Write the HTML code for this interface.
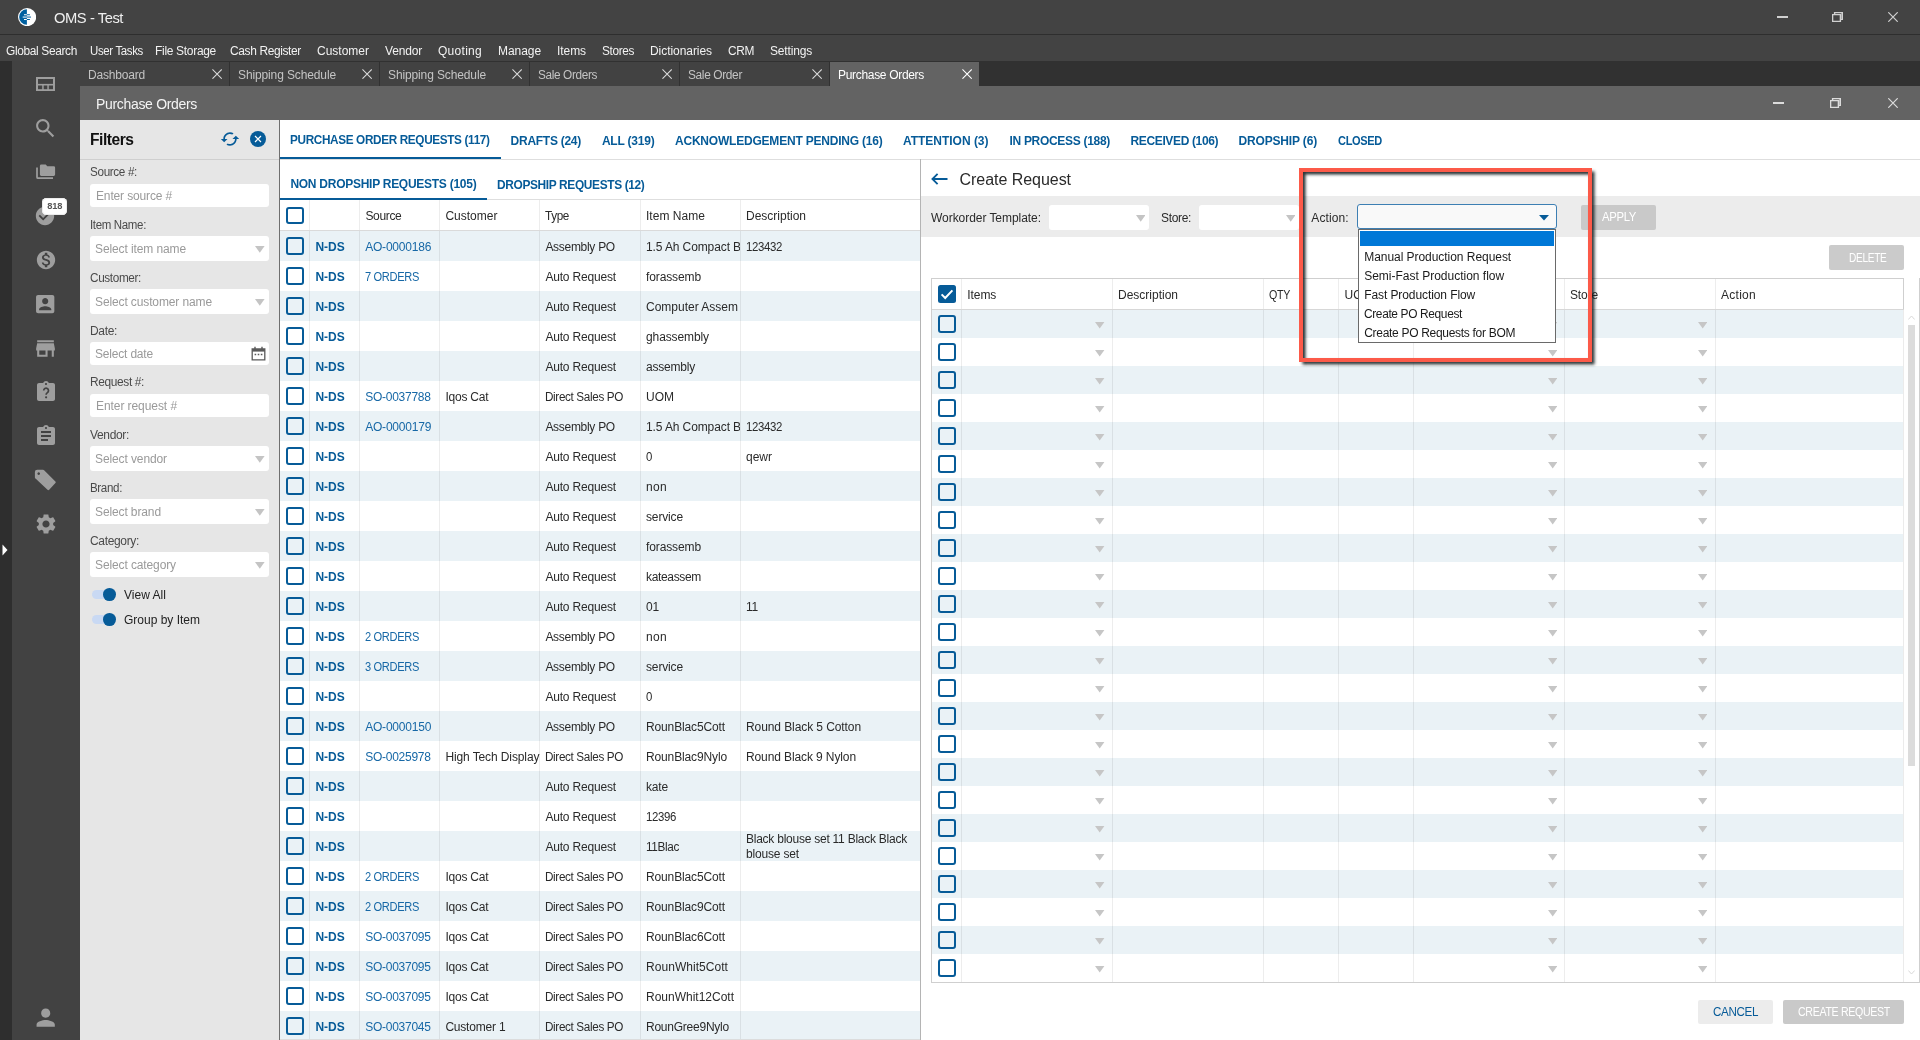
<!DOCTYPE html>
<html><head><meta charset="utf-8"><title>OMS - Test</title>
<style>
html,body{margin:0;padding:0;}
body{width:1920px;height:1040px;overflow:hidden;position:relative;background:#fff;font-family:"Liberation Sans",sans-serif;}
#r{position:absolute;left:0;top:0;width:1920px;height:1040px;overflow:hidden;will-change:transform;}
#r>div,#r>span,#r>svg{position:absolute;display:block;}
.t{white-space:nowrap;}
</style></head><body><div id="r">
<div style="left:0px;top:0px;width:1920px;height:34px;background:#434343;"></div>
<div style="left:0px;top:34px;width:1920px;height:1px;background:#2e2e2e;"></div>
<div style="left:0px;top:35px;width:1920px;height:26px;background:#434343;"></div>
<div style="left:0px;top:61px;width:1920px;height:25px;background:#313131;"></div>
<div style="left:0px;top:61px;width:12px;height:979px;background:#2e2e2e;"></div>
<div style="left:12px;top:61px;width:68px;height:979px;background:#424242;"></div>
<svg style="left:18px;top:7.8px;" width="18.2" height="18.2" viewBox="0 0 18.2 18.2"><circle cx="9.1" cy="9.1" r="9.1" fill="#fff"/><path d="M8.9 1.3A7.75 7.75 0 0 0 8.9 16.8Z" fill="#0060a0"/><path d="M6 6.7h2.9M6 11.6h2.9" stroke="#fff" stroke-width="1.05" fill="none"/><path d="M4.7 9.1h4.2" stroke="#c8dcec" stroke-width="1.3" fill="none"/><path d="M8.9 6.7h3M8.9 11.6h3" stroke="#0060a0" stroke-width="1.05" fill="none"/><path d="M8.9 9.1h4.1" stroke="#3c82b4" stroke-width="1.3" fill="none"/></svg>
<span class="t" style="left:54px;top:8.30px;font-size:15px;line-height:19px;color:#f0f0f0;letter-spacing:-0.450px;transform:scaleX(0.9823);transform-origin:0 0;">OMS - Test</span>
<div style="left:1777px;top:16.1px;width:10.5px;height:1.8px;background:#d0d0d0;"></div>
<svg style="left:1832px;top:11.5px;" width="11" height="10" viewBox="0 0 11 10"><path d="M0.6 2.6h7.8v6.8h-7.8z" fill="none" stroke="#d0d0d0" stroke-width="1.4"/><path d="M2.6 2.6V0.6h7.8v6.8H8.4" fill="none" stroke="#d0d0d0" stroke-width="1.4"/><path d="M8.9 1.2h1v5.6h-1z" fill="#d0d0d0" opacity=".6"/></svg>
<svg style="left:1887.5px;top:11.5px;" width="10" height="10" viewBox="0 0 10 10"><path d="M0.3 0.3L9.7 9.7M9.7 0.3L0.3 9.7" stroke="#d0d0d0" stroke-width="1.2"/></svg>
<span class="t" style="left:6px;top:42.84px;font-size:12px;line-height:16px;color:#f2f2f2;letter-spacing:-0.360px;transform:scaleX(0.9946);transform-origin:0 0;">Global Search</span>
<span class="t" style="left:90px;top:42.84px;font-size:12px;line-height:16px;color:#f2f2f2;letter-spacing:-0.360px;transform:scaleX(0.9543);transform-origin:0 0;">User Tasks</span>
<span class="t" style="left:155px;top:42.84px;font-size:12px;line-height:16px;color:#f2f2f2;letter-spacing:-0.310px;">File Storage</span>
<span class="t" style="left:230px;top:42.84px;font-size:12px;line-height:16px;color:#f2f2f2;letter-spacing:-0.360px;transform:scaleX(0.9948);transform-origin:0 0;">Cash Register</span>
<span class="t" style="left:317px;top:42.84px;font-size:12px;line-height:16px;color:#f2f2f2;letter-spacing:-0.003px;">Customer</span>
<span class="t" style="left:385px;top:42.84px;font-size:12px;line-height:16px;color:#f2f2f2;letter-spacing:-0.174px;">Vendor</span>
<span class="t" style="left:438px;top:42.84px;font-size:12px;line-height:16px;color:#f2f2f2;letter-spacing:0.280px;">Quoting</span>
<span class="t" style="left:498px;top:42.84px;font-size:12px;line-height:16px;color:#f2f2f2;letter-spacing:-0.062px;">Manage</span>
<span class="t" style="left:557px;top:42.84px;font-size:12px;line-height:16px;color:#f2f2f2;letter-spacing:-0.069px;">Items</span>
<span class="t" style="left:602px;top:42.84px;font-size:12px;line-height:16px;color:#f2f2f2;letter-spacing:-0.360px;transform:scaleX(0.9838);transform-origin:0 0;">Stores</span>
<span class="t" style="left:650px;top:42.84px;font-size:12px;line-height:16px;color:#f2f2f2;letter-spacing:-0.059px;">Dictionaries</span>
<span class="t" style="left:728px;top:42.84px;font-size:12px;line-height:16px;color:#f2f2f2;letter-spacing:-0.360px;transform:scaleX(0.9904);transform-origin:0 0;">CRM</span>
<span class="t" style="left:770px;top:42.84px;font-size:12px;line-height:16px;color:#f2f2f2;letter-spacing:-0.171px;">Settings</span>
<div style="left:80px;top:62px;width:149px;height:24px;background:#424242;"></div>
<span class="t" style="left:88px;top:66.84px;font-size:12px;line-height:16px;color:#c4c4c4;letter-spacing:-0.191px;">Dashboard</span>
<svg style="left:212.3px;top:69px;" width="10.2" height="10.2" viewBox="0 0 11 11"><path d="M0.5 0.5L10.5 10.5M10.5 0.5L0.5 10.5" stroke="#d8d8d8" stroke-width="1.1"/></svg>
<div style="left:230px;top:62px;width:149px;height:24px;background:#424242;"></div>
<span class="t" style="left:238px;top:66.84px;font-size:12px;line-height:16px;color:#c4c4c4;letter-spacing:-0.124px;">Shipping Schedule</span>
<svg style="left:362.3px;top:69px;" width="10.2" height="10.2" viewBox="0 0 11 11"><path d="M0.5 0.5L10.5 10.5M10.5 0.5L0.5 10.5" stroke="#d8d8d8" stroke-width="1.1"/></svg>
<div style="left:380px;top:62px;width:149px;height:24px;background:#424242;"></div>
<span class="t" style="left:388px;top:66.84px;font-size:12px;line-height:16px;color:#c4c4c4;letter-spacing:-0.124px;">Shipping Schedule</span>
<svg style="left:512.3px;top:69px;" width="10.2" height="10.2" viewBox="0 0 11 11"><path d="M0.5 0.5L10.5 10.5M10.5 0.5L0.5 10.5" stroke="#d8d8d8" stroke-width="1.1"/></svg>
<div style="left:530px;top:62px;width:149px;height:24px;background:#424242;"></div>
<span class="t" style="left:538px;top:66.84px;font-size:12px;line-height:16px;color:#c4c4c4;letter-spacing:-0.360px;transform:scaleX(0.9820);transform-origin:0 0;">Sale Orders</span>
<svg style="left:662.3px;top:69px;" width="10.2" height="10.2" viewBox="0 0 11 11"><path d="M0.5 0.5L10.5 10.5M10.5 0.5L0.5 10.5" stroke="#d8d8d8" stroke-width="1.1"/></svg>
<div style="left:680px;top:62px;width:149px;height:24px;background:#424242;"></div>
<span class="t" style="left:688px;top:66.84px;font-size:12px;line-height:16px;color:#c4c4c4;letter-spacing:-0.360px;transform:scaleX(0.9919);transform-origin:0 0;">Sale Order</span>
<svg style="left:812.3px;top:69px;" width="10.2" height="10.2" viewBox="0 0 11 11"><path d="M0.5 0.5L10.5 10.5M10.5 0.5L0.5 10.5" stroke="#d8d8d8" stroke-width="1.1"/></svg>
<div style="left:830px;top:62px;width:149px;height:24px;background:#636363;"></div>
<span class="t" style="left:838px;top:66.84px;font-size:12px;line-height:16px;color:#ffffff;letter-spacing:-0.315px;">Purchase Orders</span>
<svg style="left:962.3px;top:69px;" width="10.2" height="10.2" viewBox="0 0 11 11"><path d="M0.5 0.5L10.5 10.5M10.5 0.5L0.5 10.5" stroke="#fff" stroke-width="1.1"/></svg>
<div style="left:80px;top:86px;width:1840px;height:34px;background:#636363;"></div>
<span class="t" style="left:96px;top:95.15px;font-size:14px;line-height:18px;color:#f4f4f4;letter-spacing:-0.322px;">Purchase Orders</span>
<div style="left:1773px;top:102.1px;width:10.5px;height:1.8px;background:#dcdcdc;"></div>
<svg style="left:1830px;top:97.5px;" width="11" height="10" viewBox="0 0 11 10"><path d="M0.6 2.6h7.8v6.8h-7.8z" fill="none" stroke="#dcdcdc" stroke-width="1.4"/><path d="M2.6 2.6V0.6h7.8v6.8H8.4" fill="none" stroke="#dcdcdc" stroke-width="1.4"/><path d="M8.9 1.2h1v5.6h-1z" fill="#dcdcdc" opacity=".6"/></svg>
<svg style="left:1887.5px;top:97.5px;" width="10" height="10" viewBox="0 0 10 10"><path d="M0.3 0.3L9.7 9.7M9.7 0.3L0.3 9.7" stroke="#dcdcdc" stroke-width="1.2"/></svg>
<svg style="left:36px;top:76.8px;" width="19" height="14.2" viewBox="0 0 19 14.2"><rect x="1" y="1" width="17" height="12.2" fill="none" stroke="#9e9e9e" stroke-width="2"/><path d="M1 7.7h17" stroke="#9e9e9e" stroke-width="1.6" fill="none"/><path d="M6.9 8v5M12.1 8v5" stroke="#9e9e9e" stroke-width="1.9" stroke-opacity=".8" fill="none"/></svg>
<svg style="left:33.300000000000004px;top:115.79999999999998px;" width="24.8" height="24.8" viewBox="0 0 24 24"><path d="M15.5 14h-.79l-.28-.27C15.41 12.59 16 11.11 16 9.5 16 5.91 13.09 3 9.5 3S3 5.91 3 9.5 5.91 16 9.5 16c1.61 0 3.09-.59 4.23-1.57l.27.28v.79l5 4.99L20.49 19l-4.99-5zm-6 0C7.01 14 5 11.99 5 9.5S7.01 5 9.5 5 14 7.01 14 9.5 11.99 14 9.5 14z" fill="#9e9e9e"/></svg>
<svg style="left:36px;top:164px;" width="20" height="16" viewBox="0 0 20 16"><path d="M5.3 0.6h4.4l1.6 1.6h6.4a1.4 1.4 0 0 1 1.4 1.4v7a1.4 1.4 0 0 1-1.4 1.4H5.3a1.4 1.4 0 0 1-1.4-1.4V2a1.4 1.4 0 0 1 1.4-1.4z" fill="#9e9e9e"/><path d="M1 3.4V13.2a1 1 0 0 0 1 1H17" fill="none" stroke="#9e9e9e" stroke-width="1.7"/></svg>
<svg style="left:34.4px;top:204.9px;" width="22" height="22" viewBox="0 0 24 24"><path d="M12 2C6.48 2 2 6.48 2 12s4.48 10 10 10 10-4.48 10-10S17.52 2 12 2zm-2 15l-5-5 1.41-1.41L10 14.17l7.59-7.59L19 8l-9 9z" fill="#9e9e9e"/></svg>
<svg style="left:34.6px;top:249.0px;" width="22" height="22" viewBox="0 0 24 24"><path d="M12 2C6.48 2 2 6.48 2 12s4.48 10 10 10 10-4.48 10-10S17.52 2 12 2zm1.41 16.09V20h-2.67v-1.93c-1.71-.36-3.16-1.46-3.27-3.4h1.96c.1 1.05.82 1.87 2.65 1.87 1.96 0 2.4-.98 2.4-1.59 0-.83-.44-1.61-2.67-2.14-2.48-.6-4.18-1.62-4.18-3.67 0-1.72 1.39-2.84 3.11-3.21V4h2.67v1.95c1.86.45 2.79 1.86 2.85 3.39H14.3c-.05-1.11-.64-1.87-2.22-1.87-1.5 0-2.4.68-2.4 1.64 0 .84.65 1.39 2.67 1.91s4.18 1.39 4.18 3.91c-.01 1.83-1.38 2.83-3.12 3.16z" fill="#9e9e9e"/></svg>
<svg style="left:33.2px;top:291.85px;" width="24.4" height="24.4" viewBox="0 0 24 24"><path d="M3 5v14c0 1.1.89 2 2 2h14c1.1 0 2-.9 2-2V5c0-1.1-.9-2-2-2H5c-1.11 0-2 .9-2 2zm12 4c0 1.66-1.34 3-3 3s-3-1.34-3-3 1.34-3 3-3 3 1.34 3 3zm-9 8c0-2 4-3.1 6-3.1s6 1.1 6 3.1v1H6v-1z" fill="#9e9e9e"/></svg>
<svg style="left:33.2px;top:335.6px;" width="25" height="25" viewBox="0 0 24 24"><path d="M20 4H4v2h16V4zm1 10v-2l-1-5H4l-1 5v2h1v6h10v-6h4v6h2v-6h1zm-9 4H6v-4h6v4z" fill="#9e9e9e"/></svg>
<svg style="left:33.5px;top:380.1px;" width="24" height="24" viewBox="0 0 24 24"><path d="M19 3h-4.18C14.4 1.84 13.3 1 12 1c-1.3 0-2.4.84-2.82 2H5c-1.1 0-2 .9-2 2v14c0 1.1.9 2 2 2h14c1.1 0 2-.9 2-2V5c0-1.1-.9-2-2-2zm-7 0c.55 0 1 .45 1 1s-.45 1-1 1-1-.45-1-1 .45-1 1-1z" fill="#9e9e9e"/><path d="M9.7 10.6a2.4 2.4 0 1 1 3.7 2c-.9.6-1.3 1-1.300 2.100" fill="none" stroke="#424242" stroke-width="1.7"/><circle cx="12.1" cy="17.300" r="1.1" fill="#424242"/></svg>
<svg style="left:33.5px;top:424.0px;" width="24" height="24" viewBox="0 0 24 24"><path d="M19 3h-4.18C14.4 1.84 13.3 1 12 1c-1.3 0-2.4.84-2.82 2H5c-1.1 0-2 .9-2 2v14c0 1.1.9 2 2 2h14c1.1 0 2-.9 2-2V5c0-1.1-.9-2-2-2zm-7 0c.55 0 1 .45 1 1s-.45 1-1 1-1-.45-1-1 .45-1 1-1zm2 14H7v-2h7v2zm3-4H7v-2h10v2zm0-4H7V7h10v2z" fill="#9e9e9e"/></svg>
<svg style="left:34px;top:469px;" width="23" height="23" viewBox="0 0 23 23"><path d="M3.2 0.8H9a1.6 1.6 0 0 1 1.1 0.5L21.4 12.4a1.2 1.2 0 0 1 0 1.7L15.2 20.8a1.2 1.2 0 0 1-1.7 0L1.5 9.6A1.6 1.6 0 0 1 0.9 8.4V3.1A2.3 2.3 0 0 1 3.2 0.8zM4.7 3.3a1.3 1.3 0 1 0 0.01 0z" fill="#9e9e9e" fill-rule="evenodd"/></svg>
<svg style="left:33.65px;top:512.0px;" width="24" height="24" viewBox="0 0 24 24"><path d="M19.14 12.94c.04-.3.06-.61.06-.94 0-.32-.02-.64-.07-.94l2.03-1.58c.18-.14.23-.41.12-.61l-1.92-3.32c-.12-.22-.37-.29-.59-.22l-2.39.96c-.5-.38-1.03-.7-1.62-.94l-.36-2.54c-.04-.24-.24-.41-.48-.41h-3.84c-.24 0-.43.17-.47.41l-.36 2.54c-.59.24-1.13.57-1.62.94l-2.39-.96c-.22-.08-.47 0-.59.22L2.74 8.87c-.12.21-.08.47.12.61l2.03 1.58c-.05.3-.09.63-.09.94s.02.64.07.94l-2.03 1.58c-.18.14-.23.41-.12.61l1.92 3.32c.12.22.37.29.59.22l2.39-.96c.5.38 1.03.7 1.62.94l.36 2.54c.05.24.24.41.48.41h3.84c.24 0 .44-.17.47-.41l.36-2.54c.59-.24 1.13-.56 1.62-.94l2.39.96c.22.08.47 0 .59-.22l1.92-3.32c.12-.22.07-.47-.12-.61l-2.01-1.58zM12 15.6c-1.98 0-3.6-1.62-3.6-3.6s1.62-3.6 3.6-3.6 3.6 1.62 3.6 3.6-1.62 3.6-3.6 3.6z" fill="#9e9e9e"/></svg>
<svg style="left:31.8px;top:1004.3px;" width="27.4" height="27.4" viewBox="0 0 24 24"><path d="M12 12c2.21 0 4-1.79 4-4s-1.79-4-4-4-4 1.79-4 4 1.79 4 4 4zm0 2c-2.67 0-8 1.34-8 4v2h16v-2c0-2.66-5.33-4-8-4z" fill="#9e9e9e"/></svg>
<div style="left:42px;top:198px;width:25px;height:16.5px;background:#ffffff;border-radius:4.5px;box-shadow:inset 0 0 0 1px #ececec;"></div>
<span class="t" style="left:47.2px;top:199.93px;font-size:9.3px;line-height:13.3px;color:#555;letter-spacing:-0.172px;font-weight:bold;">818</span>
<svg style="left:2px;top:544px;" width="6" height="12" viewBox="0 0 6 12"><path d="M0.5 0.5L5.5 6L0.5 11.5Z" fill="#fff"/></svg>
<div style="left:80px;top:120px;width:199px;height:920px;background:#e6e6e6;"></div>
<div style="left:279px;top:120px;width:1px;height:920px;background:#6f6f6f;"></div>
<div style="left:80px;top:159px;width:199px;height:1px;background:#cfcfcf;"></div>
<span class="t" style="left:90px;top:129.96px;font-size:16px;line-height:20px;color:#111;letter-spacing:-0.480px;transform:scaleX(0.9741);transform-origin:0 0;font-weight:bold;">Filters</span>
<svg style="left:220.2px;top:129px;" width="20" height="20" viewBox="0 0 24 24"><path d="M19 8l-4 4h3c0 3.31-2.69 6-6 6-1.01 0-1.97-.25-2.8-.7l-1.46 1.46C8.97 19.54 10.43 20 12 20c4.42 0 8-3.58 8-8h3l-4-4zM6 12c0-3.31 2.69-6 6-6 1.01 0 1.97.25 2.8.7l1.46-1.46C15.03 4.46 13.57 4 12 4c-4.42 0-8 3.58-8 8H1l4 4 4-4H6z" fill="#065b98"/></svg>
<svg style="left:250px;top:131px;" width="16" height="16" viewBox="0 0 16 16"><circle cx="8" cy="8" r="8" fill="#065b98"/><path d="M5 5l6 6M11 5l-6 6" stroke="#fff" stroke-width="1.15"/></svg>
<span class="t" style="left:90px;top:163.84px;font-size:12px;line-height:16px;color:#4a4a4a;letter-spacing:-0.360px;transform:scaleX(0.9764);transform-origin:0 0;">Source #:</span>
<div style="left:90px;top:184px;width:179px;height:23px;background:#ffffff;border-radius:3px;"></div>
<span class="t" style="left:96px;top:187.64px;font-size:12px;line-height:16px;color:#9a9a9a;letter-spacing:-0.147px;">Enter source #</span>
<span class="t" style="left:90px;top:216.84px;font-size:12px;line-height:16px;color:#4a4a4a;letter-spacing:-0.360px;transform:scaleX(0.9584);transform-origin:0 0;">Item Name:</span>
<div style="left:90px;top:236px;width:179px;height:25px;background:#ffffff;border-radius:3px;"></div>
<span class="t" style="left:95px;top:240.64px;font-size:12px;line-height:16px;color:#9a9a9a;letter-spacing:-0.108px;">Select item name</span>
<svg style="left:255.4px;top:246px;" width="9.6" height="6.8" viewBox="0 0 10 7"><path d="M0 0h10L5 7Z" fill="#c4c4c4"/></svg>
<span class="t" style="left:90px;top:269.84px;font-size:12px;line-height:16px;color:#4a4a4a;letter-spacing:-0.360px;transform:scaleX(0.9785);transform-origin:0 0;">Customer:</span>
<div style="left:90px;top:289px;width:179px;height:25px;background:#ffffff;border-radius:3px;"></div>
<span class="t" style="left:95px;top:293.64px;font-size:12px;line-height:16px;color:#9a9a9a;letter-spacing:-0.121px;">Select customer name</span>
<svg style="left:255.4px;top:299px;" width="9.6" height="6.8" viewBox="0 0 10 7"><path d="M0 0h10L5 7Z" fill="#c4c4c4"/></svg>
<span class="t" style="left:90px;top:322.84px;font-size:12px;line-height:16px;color:#4a4a4a;letter-spacing:-0.338px;">Date:</span>
<div style="left:90px;top:342px;width:179px;height:23px;background:#ffffff;border-radius:3px;"></div>
<span class="t" style="left:95px;top:345.64px;font-size:12px;line-height:16px;color:#9a9a9a;letter-spacing:-0.187px;">Select date</span>
<span class="t" style="left:90px;top:373.84px;font-size:12px;line-height:16px;color:#4a4a4a;letter-spacing:-0.360px;transform:scaleX(0.9917);transform-origin:0 0;">Request #:</span>
<div style="left:90px;top:394px;width:179px;height:23px;background:#ffffff;border-radius:3px;"></div>
<span class="t" style="left:96px;top:397.64px;font-size:12px;line-height:16px;color:#9a9a9a;letter-spacing:-0.071px;">Enter request #</span>
<span class="t" style="left:90px;top:426.84px;font-size:12px;line-height:16px;color:#4a4a4a;letter-spacing:-0.340px;">Vendor:</span>
<div style="left:90px;top:446px;width:179px;height:25px;background:#ffffff;border-radius:3px;"></div>
<span class="t" style="left:95px;top:450.64px;font-size:12px;line-height:16px;color:#9a9a9a;letter-spacing:-0.107px;">Select vendor</span>
<svg style="left:255.4px;top:456px;" width="9.6" height="6.8" viewBox="0 0 10 7"><path d="M0 0h10L5 7Z" fill="#c4c4c4"/></svg>
<span class="t" style="left:90px;top:479.84px;font-size:12px;line-height:16px;color:#4a4a4a;letter-spacing:-0.360px;transform:scaleX(0.9638);transform-origin:0 0;">Brand:</span>
<div style="left:90px;top:499px;width:179px;height:25px;background:#ffffff;border-radius:3px;"></div>
<span class="t" style="left:95px;top:503.64px;font-size:12px;line-height:16px;color:#9a9a9a;letter-spacing:-0.116px;">Select brand</span>
<svg style="left:255.4px;top:509px;" width="9.6" height="6.8" viewBox="0 0 10 7"><path d="M0 0h10L5 7Z" fill="#c4c4c4"/></svg>
<span class="t" style="left:90px;top:532.84px;font-size:12px;line-height:16px;color:#4a4a4a;letter-spacing:-0.338px;">Category:</span>
<div style="left:90px;top:552px;width:179px;height:25px;background:#ffffff;border-radius:3px;"></div>
<span class="t" style="left:95px;top:556.64px;font-size:12px;line-height:16px;color:#9a9a9a;letter-spacing:-0.115px;">Select category</span>
<svg style="left:255.4px;top:562px;" width="9.6" height="6.8" viewBox="0 0 10 7"><path d="M0 0h10L5 7Z" fill="#c4c4c4"/></svg>
<svg style="left:251px;top:346px;" width="15" height="15" viewBox="0 0 15 15"><path d="M1.2 3h12.6v10.8H1.2z" fill="#fff" stroke="#5a5a5a" stroke-width="1.3"/><path d="M1.2 3h12.6v2.6H1.2z" fill="#5a5a5a"/><path d="M4 0.8v2.4M11 0.8v2.4" stroke="#5a5a5a" stroke-width="1.4"/><path d="M3.6 8.6h1.6M6.7 8.6h1.6M9.8 8.6h1.6" stroke="#5a5a5a" stroke-width="1.5"/></svg>
<div style="left:92px;top:590.0px;width:22px;height:9px;background:#c9d9f3;border-radius:5px;"></div>
<div style="left:103.2px;top:588.1px;width:12.8px;height:12.8px;background:#065b98;border-radius:50%;"></div>
<span class="t" style="left:124px;top:586.74px;font-size:12px;line-height:16px;color:#222;letter-spacing:0.023px;">View All</span>
<div style="left:92px;top:615.0px;width:22px;height:9px;background:#c9d9f3;border-radius:5px;"></div>
<div style="left:103.2px;top:613.1px;width:12.8px;height:12.8px;background:#065b98;border-radius:50%;"></div>
<span class="t" style="left:124px;top:611.74px;font-size:12px;line-height:16px;color:#222;letter-spacing:-0.004px;">Group by Item</span>
<div style="left:280px;top:120px;width:1640px;height:920px;background:#ffffff;"></div>
<div style="left:280px;top:159px;width:1640px;height:1px;background:#dedede;"></div>
<span class="t" style="left:290.4px;top:131.84px;font-size:12px;line-height:16px;color:#065b98;letter-spacing:-0.360px;transform:scaleX(0.9802);transform-origin:0 0;font-weight:bold;">PURCHASE ORDER REQUESTS (117)</span>
<span class="t" style="left:510.6px;top:132.84px;font-size:12px;line-height:16px;color:#065b98;letter-spacing:-0.268px;font-weight:bold;">DRAFTS (24)</span>
<span class="t" style="left:601.9px;top:132.84px;font-size:12px;line-height:16px;color:#065b98;letter-spacing:-0.197px;font-weight:bold;">ALL (319)</span>
<span class="t" style="left:675px;top:132.84px;font-size:12px;line-height:16px;color:#065b98;letter-spacing:-0.210px;font-weight:bold;">ACKNOWLEDGEMENT PENDING (16)</span>
<span class="t" style="left:903px;top:132.84px;font-size:12px;line-height:16px;color:#065b98;letter-spacing:-0.022px;font-weight:bold;">ATTENTION (3)</span>
<span class="t" style="left:1009.5px;top:132.84px;font-size:12px;line-height:16px;color:#065b98;letter-spacing:-0.305px;font-weight:bold;">IN PROCESS (188)</span>
<span class="t" style="left:1130.5px;top:132.84px;font-size:12px;line-height:16px;color:#065b98;letter-spacing:-0.360px;font-weight:bold;">RECEIVED (106)</span>
<span class="t" style="left:1238.5px;top:132.84px;font-size:12px;line-height:16px;color:#065b98;letter-spacing:-0.165px;font-weight:bold;">DROPSHIP (6)</span>
<span class="t" style="left:1338px;top:132.84px;font-size:12px;line-height:16px;color:#065b98;letter-spacing:-0.360px;transform:scaleX(0.9195);transform-origin:0 0;font-weight:bold;">CLOSED</span>
<div style="left:280px;top:157px;width:220.5px;height:2px;background:#065b98;"></div>
<span class="t" style="left:290.4px;top:176.14px;font-size:12px;line-height:16px;color:#065b98;letter-spacing:-0.266px;font-weight:bold;">NON DROPSHIP REQUESTS (105)</span>
<span class="t" style="left:496.7px;top:177.14px;font-size:12px;line-height:16px;color:#065b98;letter-spacing:-0.360px;transform:scaleX(0.9927);transform-origin:0 0;font-weight:bold;">DROPSHIP REQUESTS (12)</span>
<div style="left:280px;top:199px;width:640px;height:1px;background:#dedede;"></div>
<div style="left:280px;top:197.5px;width:206.7px;height:2px;background:#065b98;"></div>
<div style="left:280px;top:231px;width:640px;height:30px;background:#eaf2f6;"></div>
<div style="left:280px;top:291px;width:640px;height:30px;background:#eaf2f6;"></div>
<div style="left:280px;top:351px;width:640px;height:30px;background:#eaf2f6;"></div>
<div style="left:280px;top:411px;width:640px;height:30px;background:#eaf2f6;"></div>
<div style="left:280px;top:471px;width:640px;height:30px;background:#eaf2f6;"></div>
<div style="left:280px;top:531px;width:640px;height:30px;background:#eaf2f6;"></div>
<div style="left:280px;top:591px;width:640px;height:30px;background:#eaf2f6;"></div>
<div style="left:280px;top:651px;width:640px;height:30px;background:#eaf2f6;"></div>
<div style="left:280px;top:711px;width:640px;height:30px;background:#eaf2f6;"></div>
<div style="left:280px;top:771px;width:640px;height:30px;background:#eaf2f6;"></div>
<div style="left:280px;top:831px;width:640px;height:30px;background:#eaf2f6;"></div>
<div style="left:280px;top:891px;width:640px;height:30px;background:#eaf2f6;"></div>
<div style="left:280px;top:951px;width:640px;height:30px;background:#eaf2f6;"></div>
<div style="left:280px;top:1011px;width:640px;height:30px;background:#eaf2f6;"></div>
<div style="left:309px;top:200px;width:1px;height:840px;background:rgba(0,0,0,0.07);"></div>
<div style="left:359px;top:200px;width:1px;height:840px;background:rgba(0,0,0,0.07);"></div>
<div style="left:439px;top:200px;width:1px;height:840px;background:rgba(0,0,0,0.07);"></div>
<div style="left:539px;top:200px;width:1px;height:840px;background:rgba(0,0,0,0.07);"></div>
<div style="left:640px;top:200px;width:1px;height:840px;background:rgba(0,0,0,0.07);"></div>
<div style="left:740px;top:200px;width:1px;height:840px;background:rgba(0,0,0,0.07);"></div>
<div style="left:280px;top:230px;width:640px;height:1px;background:#dadada;"></div>
<div style="left:280px;top:1039px;width:640px;height:1px;background:#dcdcdc;"></div>
<div style="left:286px;top:206.5px;width:17.5px;height:17.5px;box-sizing:border-box;border:2px solid #065b98;border-radius:3px;"></div>
<span class="t" style="left:365.4px;top:207.84px;font-size:12px;line-height:16px;color:#2a2a2a;letter-spacing:-0.338px;">Source</span>
<span class="t" style="left:445.4px;top:207.84px;font-size:12px;line-height:16px;color:#2a2a2a;letter-spacing:-0.003px;">Customer</span>
<span class="t" style="left:545.4px;top:207.84px;font-size:12px;line-height:16px;color:#2a2a2a;letter-spacing:-0.360px;transform:scaleX(0.9763);transform-origin:0 0;">Type</span>
<span class="t" style="left:646px;top:207.84px;font-size:12px;line-height:16px;color:#2a2a2a;letter-spacing:0.034px;">Item Name</span>
<span class="t" style="left:746px;top:207.84px;font-size:12px;line-height:16px;color:#2a2a2a;letter-spacing:-0.004px;">Description</span>
<div style="left:286px;top:237px;width:18px;height:18px;box-sizing:border-box;border:2px solid #065b98;border-radius:3px;"></div>
<span class="t" style="left:315.4px;top:238.54px;font-size:12px;line-height:16px;color:#065b98;letter-spacing:-0.009px;font-weight:bold;">N-DS</span>
<span class="t" style="left:365.2px;top:238.54px;font-size:12px;line-height:16px;color:#1768a6;letter-spacing:-0.207px;">AO-0000186</span>
<span class="t" style="left:545.4px;top:238.54px;font-size:12px;line-height:16px;color:#2a2a2a;letter-spacing:-0.290px;">Assembly PO</span>
<span class="t" style="left:646px;top:238.54px;font-size:12px;line-height:16px;color:#2a2a2a;letter-spacing:-0.109px;max-width:94px;overflow:hidden;">1.5 Ah Compact B</span>
<span class="t" style="left:746px;top:238.54px;font-size:12px;line-height:16px;color:#2a2a2a;letter-spacing:-0.360px;transform:scaleX(0.9500);transform-origin:0 0;">123432</span>
<div style="left:286px;top:267px;width:18px;height:18px;box-sizing:border-box;border:2px solid #065b98;border-radius:3px;"></div>
<span class="t" style="left:315.4px;top:268.54px;font-size:12px;line-height:16px;color:#065b98;letter-spacing:-0.009px;font-weight:bold;">N-DS</span>
<span class="t" style="left:365.2px;top:268.54px;font-size:12px;line-height:16px;color:#1768a6;letter-spacing:-0.360px;transform:scaleX(0.9234);transform-origin:0 0;">7 ORDERS</span>
<span class="t" style="left:545.4px;top:268.54px;font-size:12px;line-height:16px;color:#2a2a2a;letter-spacing:-0.186px;">Auto Request</span>
<span class="t" style="left:646px;top:268.54px;font-size:12px;line-height:16px;color:#2a2a2a;letter-spacing:-0.115px;">forassemb</span>
<div style="left:286px;top:297px;width:18px;height:18px;box-sizing:border-box;border:2px solid #065b98;border-radius:3px;"></div>
<span class="t" style="left:315.4px;top:298.54px;font-size:12px;line-height:16px;color:#065b98;letter-spacing:-0.009px;font-weight:bold;">N-DS</span>
<span class="t" style="left:545.4px;top:298.54px;font-size:12px;line-height:16px;color:#2a2a2a;letter-spacing:-0.186px;">Auto Request</span>
<span class="t" style="left:646px;top:298.54px;font-size:12px;line-height:16px;color:#2a2a2a;letter-spacing:-0.004px;">Computer Assem</span>
<div style="left:286px;top:327px;width:18px;height:18px;box-sizing:border-box;border:2px solid #065b98;border-radius:3px;"></div>
<span class="t" style="left:315.4px;top:328.54px;font-size:12px;line-height:16px;color:#065b98;letter-spacing:-0.009px;font-weight:bold;">N-DS</span>
<span class="t" style="left:545.4px;top:328.54px;font-size:12px;line-height:16px;color:#2a2a2a;letter-spacing:-0.186px;">Auto Request</span>
<span class="t" style="left:646px;top:328.54px;font-size:12px;line-height:16px;color:#2a2a2a;letter-spacing:-0.104px;">ghassembly</span>
<div style="left:286px;top:357px;width:18px;height:18px;box-sizing:border-box;border:2px solid #065b98;border-radius:3px;"></div>
<span class="t" style="left:315.4px;top:358.54px;font-size:12px;line-height:16px;color:#065b98;letter-spacing:-0.009px;font-weight:bold;">N-DS</span>
<span class="t" style="left:545.4px;top:358.54px;font-size:12px;line-height:16px;color:#2a2a2a;letter-spacing:-0.186px;">Auto Request</span>
<span class="t" style="left:646px;top:358.54px;font-size:12px;line-height:16px;color:#2a2a2a;letter-spacing:-0.211px;">assembly</span>
<div style="left:286px;top:387px;width:18px;height:18px;box-sizing:border-box;border:2px solid #065b98;border-radius:3px;"></div>
<span class="t" style="left:315.4px;top:388.54px;font-size:12px;line-height:16px;color:#065b98;letter-spacing:-0.009px;font-weight:bold;">N-DS</span>
<span class="t" style="left:365.2px;top:388.54px;font-size:12px;line-height:16px;color:#1768a6;letter-spacing:-0.257px;">SO-0037788</span>
<span class="t" style="left:445.4px;top:388.54px;font-size:12px;line-height:16px;color:#2a2a2a;letter-spacing:-0.213px;">Iqos Cat</span>
<span class="t" style="left:545.4px;top:388.54px;font-size:12px;line-height:16px;color:#2a2a2a;letter-spacing:-0.360px;transform:scaleX(0.9753);transform-origin:0 0;">Direct Sales PO</span>
<span class="t" style="left:646px;top:388.54px;font-size:12px;line-height:16px;color:#2a2a2a;letter-spacing:0.000px;">UOM</span>
<div style="left:286px;top:417px;width:18px;height:18px;box-sizing:border-box;border:2px solid #065b98;border-radius:3px;"></div>
<span class="t" style="left:315.4px;top:418.54px;font-size:12px;line-height:16px;color:#065b98;letter-spacing:-0.009px;font-weight:bold;">N-DS</span>
<span class="t" style="left:365.2px;top:418.54px;font-size:12px;line-height:16px;color:#1768a6;letter-spacing:-0.207px;">AO-0000179</span>
<span class="t" style="left:545.4px;top:418.54px;font-size:12px;line-height:16px;color:#2a2a2a;letter-spacing:-0.290px;">Assembly PO</span>
<span class="t" style="left:646px;top:418.54px;font-size:12px;line-height:16px;color:#2a2a2a;letter-spacing:-0.109px;max-width:94px;overflow:hidden;">1.5 Ah Compact B</span>
<span class="t" style="left:746px;top:418.54px;font-size:12px;line-height:16px;color:#2a2a2a;letter-spacing:-0.360px;transform:scaleX(0.9500);transform-origin:0 0;">123432</span>
<div style="left:286px;top:447px;width:18px;height:18px;box-sizing:border-box;border:2px solid #065b98;border-radius:3px;"></div>
<span class="t" style="left:315.4px;top:448.54px;font-size:12px;line-height:16px;color:#065b98;letter-spacing:-0.009px;font-weight:bold;">N-DS</span>
<span class="t" style="left:545.4px;top:448.54px;font-size:12px;line-height:16px;color:#2a2a2a;letter-spacing:-0.186px;">Auto Request</span>
<span class="t" style="left:646px;top:448.54px;font-size:12px;line-height:16px;color:#2a2a2a;letter-spacing:-0.360px;transform:scaleX(0.9500);transform-origin:0 0;">0</span>
<span class="t" style="left:746px;top:448.54px;font-size:12px;line-height:16px;color:#2a2a2a;letter-spacing:-0.004px;">qewr</span>
<div style="left:286px;top:477px;width:18px;height:18px;box-sizing:border-box;border:2px solid #065b98;border-radius:3px;"></div>
<span class="t" style="left:315.4px;top:478.54px;font-size:12px;line-height:16px;color:#065b98;letter-spacing:-0.009px;font-weight:bold;">N-DS</span>
<span class="t" style="left:545.4px;top:478.54px;font-size:12px;line-height:16px;color:#2a2a2a;letter-spacing:-0.186px;">Auto Request</span>
<span class="t" style="left:646px;top:478.54px;font-size:12px;line-height:16px;color:#2a2a2a;letter-spacing:0.324px;">non</span>
<div style="left:286px;top:507px;width:18px;height:18px;box-sizing:border-box;border:2px solid #065b98;border-radius:3px;"></div>
<span class="t" style="left:315.4px;top:508.54px;font-size:12px;line-height:16px;color:#065b98;letter-spacing:-0.009px;font-weight:bold;">N-DS</span>
<span class="t" style="left:545.4px;top:508.54px;font-size:12px;line-height:16px;color:#2a2a2a;letter-spacing:-0.186px;">Auto Request</span>
<span class="t" style="left:646px;top:508.54px;font-size:12px;line-height:16px;color:#2a2a2a;letter-spacing:-0.145px;">service</span>
<div style="left:286px;top:537px;width:18px;height:18px;box-sizing:border-box;border:2px solid #065b98;border-radius:3px;"></div>
<span class="t" style="left:315.4px;top:538.54px;font-size:12px;line-height:16px;color:#065b98;letter-spacing:-0.009px;font-weight:bold;">N-DS</span>
<span class="t" style="left:545.4px;top:538.54px;font-size:12px;line-height:16px;color:#2a2a2a;letter-spacing:-0.186px;">Auto Request</span>
<span class="t" style="left:646px;top:538.54px;font-size:12px;line-height:16px;color:#2a2a2a;letter-spacing:-0.115px;">forassemb</span>
<div style="left:286px;top:567px;width:18px;height:18px;box-sizing:border-box;border:2px solid #065b98;border-radius:3px;"></div>
<span class="t" style="left:315.4px;top:568.54px;font-size:12px;line-height:16px;color:#065b98;letter-spacing:-0.009px;font-weight:bold;">N-DS</span>
<span class="t" style="left:545.4px;top:568.54px;font-size:12px;line-height:16px;color:#2a2a2a;letter-spacing:-0.186px;">Auto Request</span>
<span class="t" style="left:646px;top:568.54px;font-size:12px;line-height:16px;color:#2a2a2a;letter-spacing:-0.337px;">kateassem</span>
<div style="left:286px;top:597px;width:18px;height:18px;box-sizing:border-box;border:2px solid #065b98;border-radius:3px;"></div>
<span class="t" style="left:315.4px;top:598.54px;font-size:12px;line-height:16px;color:#065b98;letter-spacing:-0.009px;font-weight:bold;">N-DS</span>
<span class="t" style="left:545.4px;top:598.54px;font-size:12px;line-height:16px;color:#2a2a2a;letter-spacing:-0.186px;">Auto Request</span>
<span class="t" style="left:646px;top:598.54px;font-size:12px;line-height:16px;color:#2a2a2a;letter-spacing:-0.176px;">01</span>
<span class="t" style="left:746px;top:598.54px;font-size:12px;line-height:16px;color:#2a2a2a;letter-spacing:-0.230px;">11</span>
<div style="left:286px;top:627px;width:18px;height:18px;box-sizing:border-box;border:2px solid #065b98;border-radius:3px;"></div>
<span class="t" style="left:315.4px;top:628.54px;font-size:12px;line-height:16px;color:#065b98;letter-spacing:-0.009px;font-weight:bold;">N-DS</span>
<span class="t" style="left:365.2px;top:628.54px;font-size:12px;line-height:16px;color:#1768a6;letter-spacing:-0.360px;transform:scaleX(0.9234);transform-origin:0 0;">2 ORDERS</span>
<span class="t" style="left:545.4px;top:628.54px;font-size:12px;line-height:16px;color:#2a2a2a;letter-spacing:-0.290px;">Assembly PO</span>
<span class="t" style="left:646px;top:628.54px;font-size:12px;line-height:16px;color:#2a2a2a;letter-spacing:0.324px;">non</span>
<div style="left:286px;top:657px;width:18px;height:18px;box-sizing:border-box;border:2px solid #065b98;border-radius:3px;"></div>
<span class="t" style="left:315.4px;top:658.54px;font-size:12px;line-height:16px;color:#065b98;letter-spacing:-0.009px;font-weight:bold;">N-DS</span>
<span class="t" style="left:365.2px;top:658.54px;font-size:12px;line-height:16px;color:#1768a6;letter-spacing:-0.360px;transform:scaleX(0.9234);transform-origin:0 0;">3 ORDERS</span>
<span class="t" style="left:545.4px;top:658.54px;font-size:12px;line-height:16px;color:#2a2a2a;letter-spacing:-0.290px;">Assembly PO</span>
<span class="t" style="left:646px;top:658.54px;font-size:12px;line-height:16px;color:#2a2a2a;letter-spacing:-0.145px;">service</span>
<div style="left:286px;top:687px;width:18px;height:18px;box-sizing:border-box;border:2px solid #065b98;border-radius:3px;"></div>
<span class="t" style="left:315.4px;top:688.54px;font-size:12px;line-height:16px;color:#065b98;letter-spacing:-0.009px;font-weight:bold;">N-DS</span>
<span class="t" style="left:545.4px;top:688.54px;font-size:12px;line-height:16px;color:#2a2a2a;letter-spacing:-0.186px;">Auto Request</span>
<span class="t" style="left:646px;top:688.54px;font-size:12px;line-height:16px;color:#2a2a2a;letter-spacing:-0.360px;transform:scaleX(0.9500);transform-origin:0 0;">0</span>
<div style="left:286px;top:717px;width:18px;height:18px;box-sizing:border-box;border:2px solid #065b98;border-radius:3px;"></div>
<span class="t" style="left:315.4px;top:718.54px;font-size:12px;line-height:16px;color:#065b98;letter-spacing:-0.009px;font-weight:bold;">N-DS</span>
<span class="t" style="left:365.2px;top:718.54px;font-size:12px;line-height:16px;color:#1768a6;letter-spacing:-0.207px;">AO-0000150</span>
<span class="t" style="left:545.4px;top:718.54px;font-size:12px;line-height:16px;color:#2a2a2a;letter-spacing:-0.290px;">Assembly PO</span>
<span class="t" style="left:646px;top:718.54px;font-size:12px;line-height:16px;color:#2a2a2a;letter-spacing:-0.133px;">RounBlac5Cott</span>
<span class="t" style="left:746px;top:718.54px;font-size:12px;line-height:16px;color:#2a2a2a;letter-spacing:-0.088px;">Round Black 5 Cotton</span>
<div style="left:286px;top:747px;width:18px;height:18px;box-sizing:border-box;border:2px solid #065b98;border-radius:3px;"></div>
<span class="t" style="left:315.4px;top:748.54px;font-size:12px;line-height:16px;color:#065b98;letter-spacing:-0.009px;font-weight:bold;">N-DS</span>
<span class="t" style="left:365.2px;top:748.54px;font-size:12px;line-height:16px;color:#1768a6;letter-spacing:-0.257px;">SO-0025978</span>
<span class="t" style="left:445.4px;top:748.54px;font-size:12px;line-height:16px;color:#2a2a2a;letter-spacing:-0.109px;">High Tech Display</span>
<span class="t" style="left:545.4px;top:748.54px;font-size:12px;line-height:16px;color:#2a2a2a;letter-spacing:-0.360px;transform:scaleX(0.9753);transform-origin:0 0;">Direct Sales PO</span>
<span class="t" style="left:646px;top:748.54px;font-size:12px;line-height:16px;color:#2a2a2a;letter-spacing:-0.133px;">RounBlac9Nylo</span>
<span class="t" style="left:746px;top:748.54px;font-size:12px;line-height:16px;color:#2a2a2a;letter-spacing:-0.110px;">Round Black 9 Nylon</span>
<div style="left:286px;top:777px;width:18px;height:18px;box-sizing:border-box;border:2px solid #065b98;border-radius:3px;"></div>
<span class="t" style="left:315.4px;top:778.54px;font-size:12px;line-height:16px;color:#065b98;letter-spacing:-0.009px;font-weight:bold;">N-DS</span>
<span class="t" style="left:545.4px;top:778.54px;font-size:12px;line-height:16px;color:#2a2a2a;letter-spacing:-0.186px;">Auto Request</span>
<span class="t" style="left:646px;top:778.54px;font-size:12px;line-height:16px;color:#2a2a2a;letter-spacing:-0.172px;">kate</span>
<div style="left:286px;top:807px;width:18px;height:18px;box-sizing:border-box;border:2px solid #065b98;border-radius:3px;"></div>
<span class="t" style="left:315.4px;top:808.54px;font-size:12px;line-height:16px;color:#065b98;letter-spacing:-0.009px;font-weight:bold;">N-DS</span>
<span class="t" style="left:545.4px;top:808.54px;font-size:12px;line-height:16px;color:#2a2a2a;letter-spacing:-0.186px;">Auto Request</span>
<span class="t" style="left:646px;top:808.54px;font-size:12px;line-height:16px;color:#2a2a2a;letter-spacing:-0.360px;transform:scaleX(0.9500);transform-origin:0 0;">12396</span>
<div style="left:286px;top:837px;width:18px;height:18px;box-sizing:border-box;border:2px solid #065b98;border-radius:3px;"></div>
<span class="t" style="left:315.4px;top:838.54px;font-size:12px;line-height:16px;color:#065b98;letter-spacing:-0.009px;font-weight:bold;">N-DS</span>
<span class="t" style="left:545.4px;top:838.54px;font-size:12px;line-height:16px;color:#2a2a2a;letter-spacing:-0.186px;">Auto Request</span>
<span class="t" style="left:646px;top:838.54px;font-size:12px;line-height:16px;color:#2a2a2a;letter-spacing:-0.360px;transform:scaleX(0.9807);transform-origin:0 0;">11Blac</span>
<span class="t" style="left:746px;top:830.94px;font-size:12px;line-height:16px;color:#2a2a2a;letter-spacing:-0.244px;">Black blouse set 11 Black Black</span>
<span class="t" style="left:746px;top:845.94px;font-size:12px;line-height:16px;color:#2a2a2a;letter-spacing:-0.172px;">blouse set</span>
<div style="left:286px;top:867px;width:18px;height:18px;box-sizing:border-box;border:2px solid #065b98;border-radius:3px;"></div>
<span class="t" style="left:315.4px;top:868.54px;font-size:12px;line-height:16px;color:#065b98;letter-spacing:-0.009px;font-weight:bold;">N-DS</span>
<span class="t" style="left:365.2px;top:868.54px;font-size:12px;line-height:16px;color:#1768a6;letter-spacing:-0.360px;transform:scaleX(0.9234);transform-origin:0 0;">2 ORDERS</span>
<span class="t" style="left:445.4px;top:868.54px;font-size:12px;line-height:16px;color:#2a2a2a;letter-spacing:-0.213px;">Iqos Cat</span>
<span class="t" style="left:545.4px;top:868.54px;font-size:12px;line-height:16px;color:#2a2a2a;letter-spacing:-0.360px;transform:scaleX(0.9753);transform-origin:0 0;">Direct Sales PO</span>
<span class="t" style="left:646px;top:868.54px;font-size:12px;line-height:16px;color:#2a2a2a;letter-spacing:-0.133px;">RounBlac5Cott</span>
<div style="left:286px;top:897px;width:18px;height:18px;box-sizing:border-box;border:2px solid #065b98;border-radius:3px;"></div>
<span class="t" style="left:315.4px;top:898.54px;font-size:12px;line-height:16px;color:#065b98;letter-spacing:-0.009px;font-weight:bold;">N-DS</span>
<span class="t" style="left:365.2px;top:898.54px;font-size:12px;line-height:16px;color:#1768a6;letter-spacing:-0.360px;transform:scaleX(0.9234);transform-origin:0 0;">2 ORDERS</span>
<span class="t" style="left:445.4px;top:898.54px;font-size:12px;line-height:16px;color:#2a2a2a;letter-spacing:-0.213px;">Iqos Cat</span>
<span class="t" style="left:545.4px;top:898.54px;font-size:12px;line-height:16px;color:#2a2a2a;letter-spacing:-0.360px;transform:scaleX(0.9753);transform-origin:0 0;">Direct Sales PO</span>
<span class="t" style="left:646px;top:898.54px;font-size:12px;line-height:16px;color:#2a2a2a;letter-spacing:-0.133px;">RounBlac9Cott</span>
<div style="left:286px;top:927px;width:18px;height:18px;box-sizing:border-box;border:2px solid #065b98;border-radius:3px;"></div>
<span class="t" style="left:315.4px;top:928.54px;font-size:12px;line-height:16px;color:#065b98;letter-spacing:-0.009px;font-weight:bold;">N-DS</span>
<span class="t" style="left:365.2px;top:928.54px;font-size:12px;line-height:16px;color:#1768a6;letter-spacing:-0.257px;">SO-0037095</span>
<span class="t" style="left:445.4px;top:928.54px;font-size:12px;line-height:16px;color:#2a2a2a;letter-spacing:-0.213px;">Iqos Cat</span>
<span class="t" style="left:545.4px;top:928.54px;font-size:12px;line-height:16px;color:#2a2a2a;letter-spacing:-0.360px;transform:scaleX(0.9753);transform-origin:0 0;">Direct Sales PO</span>
<span class="t" style="left:646px;top:928.54px;font-size:12px;line-height:16px;color:#2a2a2a;letter-spacing:-0.133px;">RounBlac6Cott</span>
<div style="left:286px;top:957px;width:18px;height:18px;box-sizing:border-box;border:2px solid #065b98;border-radius:3px;"></div>
<span class="t" style="left:315.4px;top:958.54px;font-size:12px;line-height:16px;color:#065b98;letter-spacing:-0.009px;font-weight:bold;">N-DS</span>
<span class="t" style="left:365.2px;top:958.54px;font-size:12px;line-height:16px;color:#1768a6;letter-spacing:-0.257px;">SO-0037095</span>
<span class="t" style="left:445.4px;top:958.54px;font-size:12px;line-height:16px;color:#2a2a2a;letter-spacing:-0.213px;">Iqos Cat</span>
<span class="t" style="left:545.4px;top:958.54px;font-size:12px;line-height:16px;color:#2a2a2a;letter-spacing:-0.360px;transform:scaleX(0.9753);transform-origin:0 0;">Direct Sales PO</span>
<span class="t" style="left:646px;top:958.54px;font-size:12px;line-height:16px;color:#2a2a2a;letter-spacing:0.047px;">RounWhit5Cott</span>
<div style="left:286px;top:987px;width:18px;height:18px;box-sizing:border-box;border:2px solid #065b98;border-radius:3px;"></div>
<span class="t" style="left:315.4px;top:988.54px;font-size:12px;line-height:16px;color:#065b98;letter-spacing:-0.009px;font-weight:bold;">N-DS</span>
<span class="t" style="left:365.2px;top:988.54px;font-size:12px;line-height:16px;color:#1768a6;letter-spacing:-0.257px;">SO-0037095</span>
<span class="t" style="left:445.4px;top:988.54px;font-size:12px;line-height:16px;color:#2a2a2a;letter-spacing:-0.213px;">Iqos Cat</span>
<span class="t" style="left:545.4px;top:988.54px;font-size:12px;line-height:16px;color:#2a2a2a;letter-spacing:-0.360px;transform:scaleX(0.9753);transform-origin:0 0;">Direct Sales PO</span>
<span class="t" style="left:646px;top:988.54px;font-size:12px;line-height:16px;color:#2a2a2a;letter-spacing:-0.005px;">RounWhit12Cott</span>
<div style="left:286px;top:1017px;width:18px;height:18px;box-sizing:border-box;border:2px solid #065b98;border-radius:3px;"></div>
<span class="t" style="left:315.4px;top:1018.54px;font-size:12px;line-height:16px;color:#065b98;letter-spacing:-0.009px;font-weight:bold;">N-DS</span>
<span class="t" style="left:365.2px;top:1018.54px;font-size:12px;line-height:16px;color:#1768a6;letter-spacing:-0.257px;">SO-0037045</span>
<span class="t" style="left:445.4px;top:1018.54px;font-size:12px;line-height:16px;color:#2a2a2a;letter-spacing:-0.204px;">Customer 1</span>
<span class="t" style="left:545.4px;top:1018.54px;font-size:12px;line-height:16px;color:#2a2a2a;letter-spacing:-0.360px;transform:scaleX(0.9753);transform-origin:0 0;">Direct Sales PO</span>
<span class="t" style="left:646px;top:1018.54px;font-size:12px;line-height:16px;color:#2a2a2a;letter-spacing:-0.236px;">RounGree9Nylo</span>
<div style="left:920px;top:160px;width:1000px;height:880px;background:#ffffff;"></div>
<div style="left:920px;top:159px;width:1px;height:881px;background:#b4b4b4;"></div>
<svg style="left:930.5px;top:173px;" width="17" height="12" viewBox="0 0 17 12"><path d="M16.5 6H1.6M6.6 0.8L1.4 6l5.2 5.2" fill="none" stroke="#065b98" stroke-width="1.8"/></svg>
<span class="t" style="left:959.5px;top:170.16px;font-size:16px;line-height:20px;color:#2a2a2a;letter-spacing:-0.040px;">Create Request</span>
<div style="left:921px;top:196px;width:999px;height:41px;background:#ececec;"></div>
<span class="t" style="left:931px;top:209.84px;font-size:12px;line-height:16px;color:#2a2a2a;letter-spacing:-0.051px;">Workorder Template:</span>
<div style="left:1049px;top:205px;width:100px;height:25px;background:#ffffff;border-radius:3px;"></div>
<svg style="left:1135.6px;top:214.9px;" width="9.4" height="6.8" viewBox="0 0 10 7"><path d="M0 0h10L5 7Z" fill="#c4c4c4"/></svg>
<span class="t" style="left:1161px;top:209.84px;font-size:12px;line-height:16px;color:#2a2a2a;letter-spacing:-0.337px;">Store:</span>
<div style="left:1199px;top:205px;width:100px;height:25px;background:#ffffff;border-radius:3px;"></div>
<svg style="left:1285.6px;top:214.9px;" width="9.4" height="6.8" viewBox="0 0 10 7"><path d="M0 0h10L5 7Z" fill="#c4c4c4"/></svg>
<span class="t" style="left:1311.3px;top:209.84px;font-size:12px;line-height:16px;color:#2a2a2a;letter-spacing:0.115px;">Action:</span>
<div style="left:1581px;top:205px;width:75px;height:24.5px;background:#c9c9c9;border-radius:2px;"></div>
<span class="t" style="left:1602px;top:209.44px;font-size:12px;line-height:16px;color:#ffffff;letter-spacing:-0.360px;transform:scaleX(0.9444);transform-origin:0 0;">APPLY</span>
<div style="left:1829px;top:245px;width:75px;height:25px;background:#cbcbcb;border-radius:2px;"></div>
<span class="t" style="left:1848.5px;top:249.84px;font-size:12px;line-height:16px;color:#ffffff;letter-spacing:-0.360px;transform:scaleX(0.8422);transform-origin:0 0;">DELETE</span>
<div style="left:932px;top:310px;width:971px;height:28px;background:#eaf2f6;"></div>
<div style="left:932px;top:366px;width:971px;height:28px;background:#eaf2f6;"></div>
<div style="left:932px;top:422px;width:971px;height:28px;background:#eaf2f6;"></div>
<div style="left:932px;top:478px;width:971px;height:28px;background:#eaf2f6;"></div>
<div style="left:932px;top:534px;width:971px;height:28px;background:#eaf2f6;"></div>
<div style="left:932px;top:590px;width:971px;height:28px;background:#eaf2f6;"></div>
<div style="left:932px;top:646px;width:971px;height:28px;background:#eaf2f6;"></div>
<div style="left:932px;top:702px;width:971px;height:28px;background:#eaf2f6;"></div>
<div style="left:932px;top:758px;width:971px;height:28px;background:#eaf2f6;"></div>
<div style="left:932px;top:814px;width:971px;height:28px;background:#eaf2f6;"></div>
<div style="left:932px;top:870px;width:971px;height:28px;background:#eaf2f6;"></div>
<div style="left:932px;top:926px;width:971px;height:28px;background:#eaf2f6;"></div>
<div style="left:961px;top:279px;width:1px;height:703px;background:rgba(0,0,0,0.07);"></div>
<div style="left:1112px;top:279px;width:1px;height:703px;background:rgba(0,0,0,0.07);"></div>
<div style="left:1263px;top:279px;width:1px;height:703px;background:rgba(0,0,0,0.07);"></div>
<div style="left:1338px;top:279px;width:1px;height:703px;background:rgba(0,0,0,0.07);"></div>
<div style="left:1413px;top:279px;width:1px;height:703px;background:rgba(0,0,0,0.07);"></div>
<div style="left:1564px;top:279px;width:1px;height:703px;background:rgba(0,0,0,0.07);"></div>
<div style="left:1715px;top:279px;width:1px;height:703px;background:rgba(0,0,0,0.07);"></div>
<div style="left:931px;top:278px;width:973px;height:1px;background:#cfcfcf;"></div>
<div style="left:931px;top:278px;width:1px;height:705px;background:#cfcfcf;"></div>
<div style="left:1903px;top:278px;width:1px;height:32px;background:#cfcfcf;"></div>
<div style="left:1903px;top:310px;width:1px;height:672px;background:rgba(0,0,0,0.08);"></div>
<div style="left:931px;top:982px;width:989px;height:1px;background:#cfcfcf;"></div>
<div style="left:932px;top:309px;width:972px;height:1px;background:#d7d7d7;"></div>
<div style="left:1919px;top:278px;width:1px;height:705px;background:#cfcfcf;"></div>
<svg style="left:938px;top:285px;" width="18" height="18" viewBox="0 0 18 18"><rect x="0" y="0" width="18" height="18" rx="2.5" fill="#065b98"/><path d="M3.6 9.4l3.6 3.6 7.2-7.6" fill="none" stroke="#fff" stroke-width="2"/></svg>
<span class="t" style="left:967.3px;top:286.84px;font-size:12px;line-height:16px;color:#2a2a2a;letter-spacing:-0.069px;">Items</span>
<span class="t" style="left:1118px;top:286.84px;font-size:12px;line-height:16px;color:#2a2a2a;letter-spacing:-0.004px;">Description</span>
<span class="t" style="left:1268.5px;top:286.84px;font-size:12px;line-height:16px;color:#2a2a2a;letter-spacing:-0.360px;transform:scaleX(0.8901);transform-origin:0 0;">QTY</span>
<span class="t" style="left:1344.5px;top:286.84px;font-size:12px;line-height:16px;color:#2a2a2a;letter-spacing:0.000px;">UOM</span>
<span class="t" style="left:1419px;top:286.84px;font-size:12px;line-height:16px;color:#2a2a2a;letter-spacing:-0.007px;">Vendor</span>
<span class="t" style="left:1570px;top:286.84px;font-size:12px;line-height:16px;color:#2a2a2a;letter-spacing:-0.138px;">Store</span>
<span class="t" style="left:1721px;top:286.84px;font-size:12px;line-height:16px;color:#2a2a2a;letter-spacing:0.273px;">Action</span>
<div style="left:938px;top:315px;width:18px;height:18px;box-sizing:border-box;border:2px solid #065b98;border-radius:3px;"></div>
<svg style="left:1095.3999999999999px;top:322px;" width="9.4" height="6.6" viewBox="0 0 10 7"><path d="M0 0h10L5 7Z" fill="#c6c6c6"/></svg>
<svg style="left:1547.5px;top:322px;" width="9.4" height="6.6" viewBox="0 0 10 7"><path d="M0 0h10L5 7Z" fill="#c6c6c6"/></svg>
<svg style="left:1698.0px;top:322px;" width="9.4" height="6.6" viewBox="0 0 10 7"><path d="M0 0h10L5 7Z" fill="#c6c6c6"/></svg>
<div style="left:938px;top:343px;width:18px;height:18px;box-sizing:border-box;border:2px solid #065b98;border-radius:3px;"></div>
<svg style="left:1095.3999999999999px;top:350px;" width="9.4" height="6.6" viewBox="0 0 10 7"><path d="M0 0h10L5 7Z" fill="#c6c6c6"/></svg>
<svg style="left:1547.5px;top:350px;" width="9.4" height="6.6" viewBox="0 0 10 7"><path d="M0 0h10L5 7Z" fill="#c6c6c6"/></svg>
<svg style="left:1698.0px;top:350px;" width="9.4" height="6.6" viewBox="0 0 10 7"><path d="M0 0h10L5 7Z" fill="#c6c6c6"/></svg>
<div style="left:938px;top:371px;width:18px;height:18px;box-sizing:border-box;border:2px solid #065b98;border-radius:3px;"></div>
<svg style="left:1095.3999999999999px;top:378px;" width="9.4" height="6.6" viewBox="0 0 10 7"><path d="M0 0h10L5 7Z" fill="#c6c6c6"/></svg>
<svg style="left:1547.5px;top:378px;" width="9.4" height="6.6" viewBox="0 0 10 7"><path d="M0 0h10L5 7Z" fill="#c6c6c6"/></svg>
<svg style="left:1698.0px;top:378px;" width="9.4" height="6.6" viewBox="0 0 10 7"><path d="M0 0h10L5 7Z" fill="#c6c6c6"/></svg>
<div style="left:938px;top:399px;width:18px;height:18px;box-sizing:border-box;border:2px solid #065b98;border-radius:3px;"></div>
<svg style="left:1095.3999999999999px;top:406px;" width="9.4" height="6.6" viewBox="0 0 10 7"><path d="M0 0h10L5 7Z" fill="#c6c6c6"/></svg>
<svg style="left:1547.5px;top:406px;" width="9.4" height="6.6" viewBox="0 0 10 7"><path d="M0 0h10L5 7Z" fill="#c6c6c6"/></svg>
<svg style="left:1698.0px;top:406px;" width="9.4" height="6.6" viewBox="0 0 10 7"><path d="M0 0h10L5 7Z" fill="#c6c6c6"/></svg>
<div style="left:938px;top:427px;width:18px;height:18px;box-sizing:border-box;border:2px solid #065b98;border-radius:3px;"></div>
<svg style="left:1095.3999999999999px;top:434px;" width="9.4" height="6.6" viewBox="0 0 10 7"><path d="M0 0h10L5 7Z" fill="#c6c6c6"/></svg>
<svg style="left:1547.5px;top:434px;" width="9.4" height="6.6" viewBox="0 0 10 7"><path d="M0 0h10L5 7Z" fill="#c6c6c6"/></svg>
<svg style="left:1698.0px;top:434px;" width="9.4" height="6.6" viewBox="0 0 10 7"><path d="M0 0h10L5 7Z" fill="#c6c6c6"/></svg>
<div style="left:938px;top:455px;width:18px;height:18px;box-sizing:border-box;border:2px solid #065b98;border-radius:3px;"></div>
<svg style="left:1095.3999999999999px;top:462px;" width="9.4" height="6.6" viewBox="0 0 10 7"><path d="M0 0h10L5 7Z" fill="#c6c6c6"/></svg>
<svg style="left:1547.5px;top:462px;" width="9.4" height="6.6" viewBox="0 0 10 7"><path d="M0 0h10L5 7Z" fill="#c6c6c6"/></svg>
<svg style="left:1698.0px;top:462px;" width="9.4" height="6.6" viewBox="0 0 10 7"><path d="M0 0h10L5 7Z" fill="#c6c6c6"/></svg>
<div style="left:938px;top:483px;width:18px;height:18px;box-sizing:border-box;border:2px solid #065b98;border-radius:3px;"></div>
<svg style="left:1095.3999999999999px;top:490px;" width="9.4" height="6.6" viewBox="0 0 10 7"><path d="M0 0h10L5 7Z" fill="#c6c6c6"/></svg>
<svg style="left:1547.5px;top:490px;" width="9.4" height="6.6" viewBox="0 0 10 7"><path d="M0 0h10L5 7Z" fill="#c6c6c6"/></svg>
<svg style="left:1698.0px;top:490px;" width="9.4" height="6.6" viewBox="0 0 10 7"><path d="M0 0h10L5 7Z" fill="#c6c6c6"/></svg>
<div style="left:938px;top:511px;width:18px;height:18px;box-sizing:border-box;border:2px solid #065b98;border-radius:3px;"></div>
<svg style="left:1095.3999999999999px;top:518px;" width="9.4" height="6.6" viewBox="0 0 10 7"><path d="M0 0h10L5 7Z" fill="#c6c6c6"/></svg>
<svg style="left:1547.5px;top:518px;" width="9.4" height="6.6" viewBox="0 0 10 7"><path d="M0 0h10L5 7Z" fill="#c6c6c6"/></svg>
<svg style="left:1698.0px;top:518px;" width="9.4" height="6.6" viewBox="0 0 10 7"><path d="M0 0h10L5 7Z" fill="#c6c6c6"/></svg>
<div style="left:938px;top:539px;width:18px;height:18px;box-sizing:border-box;border:2px solid #065b98;border-radius:3px;"></div>
<svg style="left:1095.3999999999999px;top:546px;" width="9.4" height="6.6" viewBox="0 0 10 7"><path d="M0 0h10L5 7Z" fill="#c6c6c6"/></svg>
<svg style="left:1547.5px;top:546px;" width="9.4" height="6.6" viewBox="0 0 10 7"><path d="M0 0h10L5 7Z" fill="#c6c6c6"/></svg>
<svg style="left:1698.0px;top:546px;" width="9.4" height="6.6" viewBox="0 0 10 7"><path d="M0 0h10L5 7Z" fill="#c6c6c6"/></svg>
<div style="left:938px;top:567px;width:18px;height:18px;box-sizing:border-box;border:2px solid #065b98;border-radius:3px;"></div>
<svg style="left:1095.3999999999999px;top:574px;" width="9.4" height="6.6" viewBox="0 0 10 7"><path d="M0 0h10L5 7Z" fill="#c6c6c6"/></svg>
<svg style="left:1547.5px;top:574px;" width="9.4" height="6.6" viewBox="0 0 10 7"><path d="M0 0h10L5 7Z" fill="#c6c6c6"/></svg>
<svg style="left:1698.0px;top:574px;" width="9.4" height="6.6" viewBox="0 0 10 7"><path d="M0 0h10L5 7Z" fill="#c6c6c6"/></svg>
<div style="left:938px;top:595px;width:18px;height:18px;box-sizing:border-box;border:2px solid #065b98;border-radius:3px;"></div>
<svg style="left:1095.3999999999999px;top:602px;" width="9.4" height="6.6" viewBox="0 0 10 7"><path d="M0 0h10L5 7Z" fill="#c6c6c6"/></svg>
<svg style="left:1547.5px;top:602px;" width="9.4" height="6.6" viewBox="0 0 10 7"><path d="M0 0h10L5 7Z" fill="#c6c6c6"/></svg>
<svg style="left:1698.0px;top:602px;" width="9.4" height="6.6" viewBox="0 0 10 7"><path d="M0 0h10L5 7Z" fill="#c6c6c6"/></svg>
<div style="left:938px;top:623px;width:18px;height:18px;box-sizing:border-box;border:2px solid #065b98;border-radius:3px;"></div>
<svg style="left:1095.3999999999999px;top:630px;" width="9.4" height="6.6" viewBox="0 0 10 7"><path d="M0 0h10L5 7Z" fill="#c6c6c6"/></svg>
<svg style="left:1547.5px;top:630px;" width="9.4" height="6.6" viewBox="0 0 10 7"><path d="M0 0h10L5 7Z" fill="#c6c6c6"/></svg>
<svg style="left:1698.0px;top:630px;" width="9.4" height="6.6" viewBox="0 0 10 7"><path d="M0 0h10L5 7Z" fill="#c6c6c6"/></svg>
<div style="left:938px;top:651px;width:18px;height:18px;box-sizing:border-box;border:2px solid #065b98;border-radius:3px;"></div>
<svg style="left:1095.3999999999999px;top:658px;" width="9.4" height="6.6" viewBox="0 0 10 7"><path d="M0 0h10L5 7Z" fill="#c6c6c6"/></svg>
<svg style="left:1547.5px;top:658px;" width="9.4" height="6.6" viewBox="0 0 10 7"><path d="M0 0h10L5 7Z" fill="#c6c6c6"/></svg>
<svg style="left:1698.0px;top:658px;" width="9.4" height="6.6" viewBox="0 0 10 7"><path d="M0 0h10L5 7Z" fill="#c6c6c6"/></svg>
<div style="left:938px;top:679px;width:18px;height:18px;box-sizing:border-box;border:2px solid #065b98;border-radius:3px;"></div>
<svg style="left:1095.3999999999999px;top:686px;" width="9.4" height="6.6" viewBox="0 0 10 7"><path d="M0 0h10L5 7Z" fill="#c6c6c6"/></svg>
<svg style="left:1547.5px;top:686px;" width="9.4" height="6.6" viewBox="0 0 10 7"><path d="M0 0h10L5 7Z" fill="#c6c6c6"/></svg>
<svg style="left:1698.0px;top:686px;" width="9.4" height="6.6" viewBox="0 0 10 7"><path d="M0 0h10L5 7Z" fill="#c6c6c6"/></svg>
<div style="left:938px;top:707px;width:18px;height:18px;box-sizing:border-box;border:2px solid #065b98;border-radius:3px;"></div>
<svg style="left:1095.3999999999999px;top:714px;" width="9.4" height="6.6" viewBox="0 0 10 7"><path d="M0 0h10L5 7Z" fill="#c6c6c6"/></svg>
<svg style="left:1547.5px;top:714px;" width="9.4" height="6.6" viewBox="0 0 10 7"><path d="M0 0h10L5 7Z" fill="#c6c6c6"/></svg>
<svg style="left:1698.0px;top:714px;" width="9.4" height="6.6" viewBox="0 0 10 7"><path d="M0 0h10L5 7Z" fill="#c6c6c6"/></svg>
<div style="left:938px;top:735px;width:18px;height:18px;box-sizing:border-box;border:2px solid #065b98;border-radius:3px;"></div>
<svg style="left:1095.3999999999999px;top:742px;" width="9.4" height="6.6" viewBox="0 0 10 7"><path d="M0 0h10L5 7Z" fill="#c6c6c6"/></svg>
<svg style="left:1547.5px;top:742px;" width="9.4" height="6.6" viewBox="0 0 10 7"><path d="M0 0h10L5 7Z" fill="#c6c6c6"/></svg>
<svg style="left:1698.0px;top:742px;" width="9.4" height="6.6" viewBox="0 0 10 7"><path d="M0 0h10L5 7Z" fill="#c6c6c6"/></svg>
<div style="left:938px;top:763px;width:18px;height:18px;box-sizing:border-box;border:2px solid #065b98;border-radius:3px;"></div>
<svg style="left:1095.3999999999999px;top:770px;" width="9.4" height="6.6" viewBox="0 0 10 7"><path d="M0 0h10L5 7Z" fill="#c6c6c6"/></svg>
<svg style="left:1547.5px;top:770px;" width="9.4" height="6.6" viewBox="0 0 10 7"><path d="M0 0h10L5 7Z" fill="#c6c6c6"/></svg>
<svg style="left:1698.0px;top:770px;" width="9.4" height="6.6" viewBox="0 0 10 7"><path d="M0 0h10L5 7Z" fill="#c6c6c6"/></svg>
<div style="left:938px;top:791px;width:18px;height:18px;box-sizing:border-box;border:2px solid #065b98;border-radius:3px;"></div>
<svg style="left:1095.3999999999999px;top:798px;" width="9.4" height="6.6" viewBox="0 0 10 7"><path d="M0 0h10L5 7Z" fill="#c6c6c6"/></svg>
<svg style="left:1547.5px;top:798px;" width="9.4" height="6.6" viewBox="0 0 10 7"><path d="M0 0h10L5 7Z" fill="#c6c6c6"/></svg>
<svg style="left:1698.0px;top:798px;" width="9.4" height="6.6" viewBox="0 0 10 7"><path d="M0 0h10L5 7Z" fill="#c6c6c6"/></svg>
<div style="left:938px;top:819px;width:18px;height:18px;box-sizing:border-box;border:2px solid #065b98;border-radius:3px;"></div>
<svg style="left:1095.3999999999999px;top:826px;" width="9.4" height="6.6" viewBox="0 0 10 7"><path d="M0 0h10L5 7Z" fill="#c6c6c6"/></svg>
<svg style="left:1547.5px;top:826px;" width="9.4" height="6.6" viewBox="0 0 10 7"><path d="M0 0h10L5 7Z" fill="#c6c6c6"/></svg>
<svg style="left:1698.0px;top:826px;" width="9.4" height="6.6" viewBox="0 0 10 7"><path d="M0 0h10L5 7Z" fill="#c6c6c6"/></svg>
<div style="left:938px;top:847px;width:18px;height:18px;box-sizing:border-box;border:2px solid #065b98;border-radius:3px;"></div>
<svg style="left:1095.3999999999999px;top:854px;" width="9.4" height="6.6" viewBox="0 0 10 7"><path d="M0 0h10L5 7Z" fill="#c6c6c6"/></svg>
<svg style="left:1547.5px;top:854px;" width="9.4" height="6.6" viewBox="0 0 10 7"><path d="M0 0h10L5 7Z" fill="#c6c6c6"/></svg>
<svg style="left:1698.0px;top:854px;" width="9.4" height="6.6" viewBox="0 0 10 7"><path d="M0 0h10L5 7Z" fill="#c6c6c6"/></svg>
<div style="left:938px;top:875px;width:18px;height:18px;box-sizing:border-box;border:2px solid #065b98;border-radius:3px;"></div>
<svg style="left:1095.3999999999999px;top:882px;" width="9.4" height="6.6" viewBox="0 0 10 7"><path d="M0 0h10L5 7Z" fill="#c6c6c6"/></svg>
<svg style="left:1547.5px;top:882px;" width="9.4" height="6.6" viewBox="0 0 10 7"><path d="M0 0h10L5 7Z" fill="#c6c6c6"/></svg>
<svg style="left:1698.0px;top:882px;" width="9.4" height="6.6" viewBox="0 0 10 7"><path d="M0 0h10L5 7Z" fill="#c6c6c6"/></svg>
<div style="left:938px;top:903px;width:18px;height:18px;box-sizing:border-box;border:2px solid #065b98;border-radius:3px;"></div>
<svg style="left:1095.3999999999999px;top:910px;" width="9.4" height="6.6" viewBox="0 0 10 7"><path d="M0 0h10L5 7Z" fill="#c6c6c6"/></svg>
<svg style="left:1547.5px;top:910px;" width="9.4" height="6.6" viewBox="0 0 10 7"><path d="M0 0h10L5 7Z" fill="#c6c6c6"/></svg>
<svg style="left:1698.0px;top:910px;" width="9.4" height="6.6" viewBox="0 0 10 7"><path d="M0 0h10L5 7Z" fill="#c6c6c6"/></svg>
<div style="left:938px;top:931px;width:18px;height:18px;box-sizing:border-box;border:2px solid #065b98;border-radius:3px;"></div>
<svg style="left:1095.3999999999999px;top:938px;" width="9.4" height="6.6" viewBox="0 0 10 7"><path d="M0 0h10L5 7Z" fill="#c6c6c6"/></svg>
<svg style="left:1547.5px;top:938px;" width="9.4" height="6.6" viewBox="0 0 10 7"><path d="M0 0h10L5 7Z" fill="#c6c6c6"/></svg>
<svg style="left:1698.0px;top:938px;" width="9.4" height="6.6" viewBox="0 0 10 7"><path d="M0 0h10L5 7Z" fill="#c6c6c6"/></svg>
<div style="left:938px;top:959px;width:18px;height:18px;box-sizing:border-box;border:2px solid #065b98;border-radius:3px;"></div>
<svg style="left:1095.3999999999999px;top:966px;" width="9.4" height="6.6" viewBox="0 0 10 7"><path d="M0 0h10L5 7Z" fill="#c6c6c6"/></svg>
<svg style="left:1547.5px;top:966px;" width="9.4" height="6.6" viewBox="0 0 10 7"><path d="M0 0h10L5 7Z" fill="#c6c6c6"/></svg>
<svg style="left:1698.0px;top:966px;" width="9.4" height="6.6" viewBox="0 0 10 7"><path d="M0 0h10L5 7Z" fill="#c6c6c6"/></svg>
<div style="left:1908px;top:325px;width:7px;height:441px;background:#dcdcdc;"></div>
<svg style="left:1908px;top:315px;" width="7" height="5" viewBox="0 0 7 5"><path d="M0.3 4.5L3.5 1l3.2 3.5" fill="none" stroke="#d8d8d8" stroke-width="1"/></svg>
<svg style="left:1908px;top:970px;" width="7" height="5" viewBox="0 0 7 5"><path d="M0.3 0.5L3.5 4l3.2-3.5" fill="none" stroke="#d8d8d8" stroke-width="1"/></svg>
<div style="left:1698px;top:999.5px;width:75px;height:24.5px;background:#ececec;border-radius:2px;"></div>
<span class="t" style="left:1713px;top:1004.14px;font-size:12px;line-height:16px;color:#065b98;letter-spacing:-0.360px;transform:scaleX(0.9672);transform-origin:0 0;">CANCEL</span>
<div style="left:1783px;top:999.5px;width:121px;height:24.5px;background:#c9c9c9;border-radius:2px;"></div>
<span class="t" style="left:1798px;top:1004.14px;font-size:12px;line-height:16px;color:#ffffff;letter-spacing:-0.360px;transform:scaleX(0.8838);transform-origin:0 0;">CREATE REQUEST</span>
<div style="left:1357px;top:204px;width:200px;height:25px;background:#f9f9f9;box-sizing:border-box;border:1px solid #3d7fb3;border-radius:3px;"></div>
<svg style="left:1538.5px;top:215px;" width="10" height="6" viewBox="0 0 10 6"><path d="M0 0h10L5 5.6Z" fill="#065b98"/></svg>
<div style="left:1358px;top:229px;width:198px;height:114px;background:#ffffff;box-sizing:border-box;border:1px solid #6a6a6a;"></div>
<div style="left:1360px;top:231.3px;width:194.2px;height:14.4px;background:#0078d7;"></div>
<span class="t" style="left:1364.2px;top:249.04px;font-size:12px;line-height:16px;color:#1a1a1a;letter-spacing:-0.045px;">Manual Production Request</span>
<span class="t" style="left:1364.2px;top:268.04px;font-size:12px;line-height:16px;color:#1a1a1a;letter-spacing:-0.003px;">Semi-Fast Production flow</span>
<span class="t" style="left:1364.2px;top:287.04px;font-size:12px;line-height:16px;color:#1a1a1a;letter-spacing:-0.087px;">Fast Production Flow</span>
<span class="t" style="left:1364.2px;top:306.04px;font-size:12px;line-height:16px;color:#1a1a1a;letter-spacing:-0.360px;transform:scaleX(0.9937);transform-origin:0 0;">Create PO Request</span>
<span class="t" style="left:1364.2px;top:325.04px;font-size:12px;line-height:16px;color:#1a1a1a;letter-spacing:-0.299px;">Create PO Requests for BOM</span>
<div style="left:1299px;top:168px;width:293px;height:194px;box-sizing:border-box;border:4px solid #fc5a49;box-shadow:2.5px 2.5px 3px rgba(20,30,32,.9), inset 2.5px 2.5px 3px rgba(20,30,32,.9);"></div>
</div></body></html>
